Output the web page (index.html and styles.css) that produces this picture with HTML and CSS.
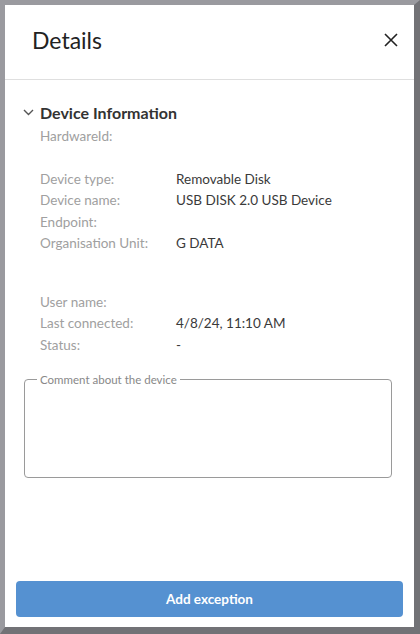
FILE: index.html
```html
<!DOCTYPE html>
<html>
<head>
<meta charset="utf-8"/>
<title>Details</title>
<link rel="stylesheet" href="styles.css">
</head>
<body>
<div class="panel">
  <div class="header">
    <h1 class="title">Details</h1>
    <button class="close" aria-label="Close">
      <svg width="14" height="14" viewBox="0 0 14 14"><path d="M1 1L13 13M13 1L1 13" stroke="#222" stroke-width="1.6" fill="none"/></svg>
    </button>
  </div>

  <div class="content">
    <div class="section-head">
      <svg class="chevron" width="11" height="7" viewBox="0 0 11 7"><path d="M1 1L5.5 5.5L10 1" stroke="#555" stroke-width="1.4" fill="none"/></svg>
      <span>Device Information</span>
    </div>

    <div class="info">
      <div class="label">HardwareId:</div><div class="value"></div>
      <div class="spacer"></div>
      <div class="label">Device type:</div><div class="value">Removable Disk</div>
      <div class="label">Device name:</div><div class="value">USB DISK 2.0 USB Device</div>
      <div class="label">Endpoint:</div><div class="value"></div>
      <div class="label">Organisation Unit:</div><div class="value">G DATA</div>
      <div class="spacer big"></div>
      <div class="label">User name:</div><div class="value"></div>
      <div class="label">Last connected:</div><div class="value">4/8/24, 11:10 AM</div>
      <div class="label">Status:</div><div class="value">-</div>
    </div>

    <fieldset class="comment">
      <legend>Comment about the device</legend>
      <textarea></textarea>
    </fieldset>
  </div>

  <div class="footer">
    <button class="primary">Add exception</button>
  </div>
</div>
</body>
</html>
```

FILE: styles.css
```css
html, body {
  margin: 0;
  height: 100%;
}

body {
  background-color: #8d8d92;
  font-family: Lato, "Noto Sans", sans-serif;
  color: #333;
}

.panel {
  box-sizing: border-box;
  height: 634px;
  width: 420px;
  border-style: solid;
  border-width: 5px 6px 7px 5px;
  border-color: #9a9a9f #727276 #727276 #9a9a9f;
  background: #fff;
  display: flex;
  flex-direction: column;
}

.header {
  height: 75px;
  flex: none;
  box-sizing: border-box;
  display: flex;
  align-items: center;
  justify-content: space-between;
  padding: 0 16px 5px 27px;
  border-bottom: 1px solid #dfdfdf;
}

.title {
  margin: 0;
  font-size: 23px;
  font-weight: 400;
  color: #222;
}

.close {
  border: none;
  background: none;
  padding: 0;
  width: 14px;
  height: 14px;
  cursor: pointer;
}

.close svg {
  display: block;
}

.content {
  padding: 22px 0 0 18px;
}

.section-head {
  display: flex;
  align-items: center;
  gap: 6px;
  font-size: 16px;
  font-weight: 700;
  color: #333;
  height: 20px;
}

.chevron {
  display: block;
}

.info {
  display: grid;
  grid-template-columns: 136px auto;
  margin: 4px 0 0 17px;
  font-size: 13.5px;
  line-height: 21.5px;
}

.label {
  color: #a0a0a0;
  min-height: 21.5px;
}

.value {
  color: #3a3a3a;
  min-height: 21.5px;
}

.spacer {
  grid-column: 1 / 3;
  height: 21px;
}

.spacer.big {
  height: 37px;
}

.comment {
  margin: 17px 0 0 1px;
  width: 368px;
  height: 105px;
  box-sizing: border-box;
  padding: 0;
  border: 1px solid #9a9a9a;
  border-radius: 4px;
}

.comment legend {
  font-size: 11.5px;
  color: #888;
  margin-left: 12px;
  padding: 0 3px;
}

.comment textarea {
  border: none;
  outline: none;
  resize: none;
  width: 100%;
  height: 86px;
  box-sizing: border-box;
}

.footer {
  margin-top: auto;
  padding: 0 11px 10px 11px;
}

.primary {
  display: block;
  width: 100%;
  height: 36px;
  border: none;
  border-radius: 4px;
  background: #5591d1;
  color: #fff;
  font-family: Lato, "Noto Sans", sans-serif;
  font-size: 13.5px;
  font-weight: 700;
}
```
